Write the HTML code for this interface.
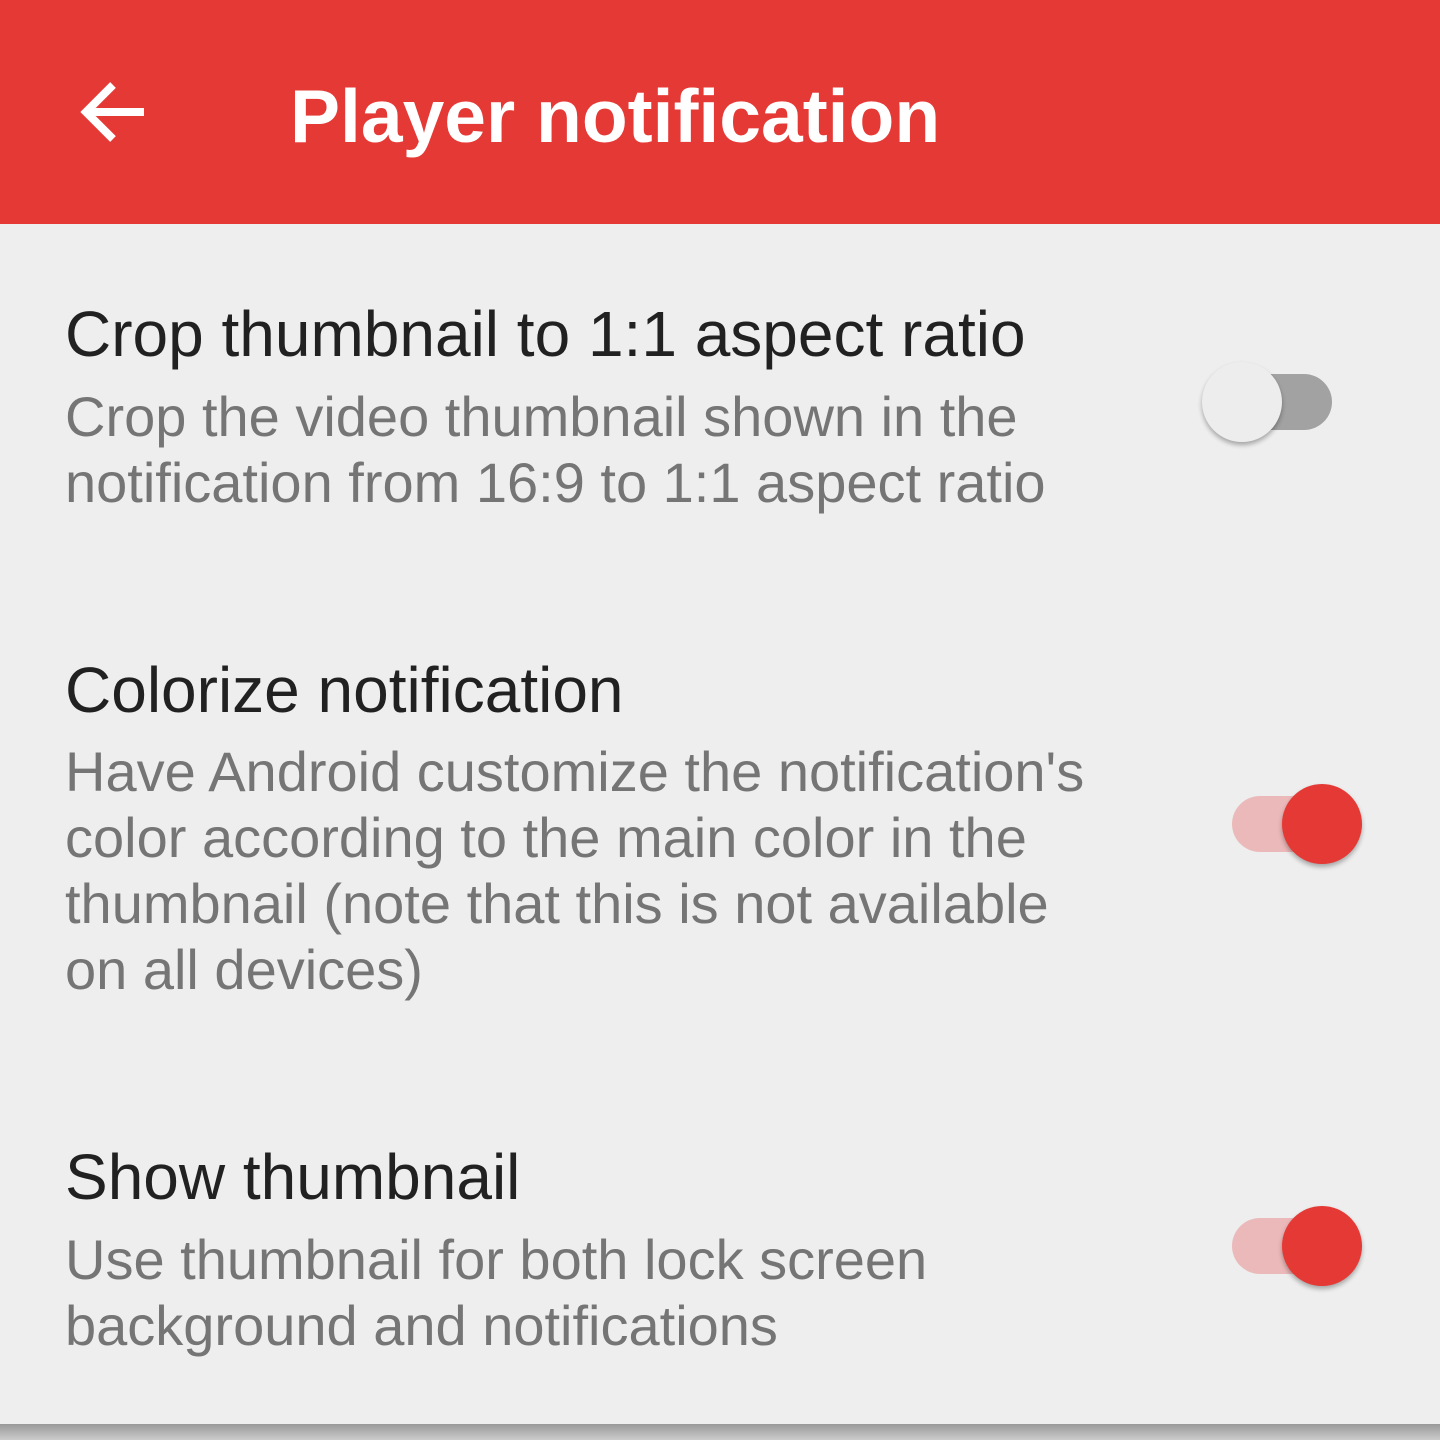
<!DOCTYPE html>
<html><head><style>
body{margin:0;width:1440px;height:1440px;background:#eeeeee;position:relative;overflow:hidden;font-family:"Liberation Sans",sans-serif}
.bar{position:absolute;left:0;top:0;width:1440px;height:224px;background:#e53935}
.h{position:absolute;left:290px;top:76px;font-size:75px;font-weight:bold;color:#fff;line-height:80px;white-space:nowrap}
.t{position:absolute;left:65px;font-size:64px;line-height:66px;color:#212121;white-space:nowrap}
.s{position:absolute;left:65px;font-size:56px;line-height:66px;color:#757575;white-space:nowrap}
.track{position:absolute;width:100px;height:56px;border-radius:28px}
.thumb{position:absolute;width:80px;height:80px;border-radius:50%;box-shadow:0 3px 5px rgba(0,0,0,.3)}
.bot{position:absolute;left:0;top:1424px;width:1440px;height:16px;background:linear-gradient(#999,#ccc)}
</style></head><body>
<div class="bar"></div>
<svg style="position:absolute;left:80px;top:80px" width="66" height="64" viewBox="0 0 66 64"><path d="M64 32H7M33 5L6 32L33 59" stroke="#fff" stroke-width="8" fill="none"/></svg>
<div class="h">Player notification</div>

<div class="t" style="top:301px">Crop thumbnail to 1:1 aspect ratio</div>
<div class="s" style="top:384px">Crop the video thumbnail shown in the<br>notification from 16:9 to 1:1 aspect ratio</div>
<div class="track" style="left:1232px;top:374px;background:#a2a2a2"></div>
<div class="thumb" style="left:1202px;top:362px;background:#ededed"></div>

<div class="t" style="top:657px">Colorize notification</div>
<div class="s" style="top:739px">Have Android customize the notification's<br>color according to the main color in the<br>thumbnail (note that this is not available<br>on all devices)</div>
<div class="track" style="left:1232px;top:796px;background:#ebb9b9"></div>
<div class="thumb" style="left:1282px;top:784px;background:#e53935"></div>

<div class="t" style="top:1144px">Show thumbnail</div>
<div class="s" style="top:1227px">Use thumbnail for both lock screen<br>background and notifications</div>
<div class="track" style="left:1232px;top:1218px;background:#ebb9b9"></div>
<div class="thumb" style="left:1282px;top:1206px;background:#e53935"></div>

<div class="bot"></div>
</body></html>
